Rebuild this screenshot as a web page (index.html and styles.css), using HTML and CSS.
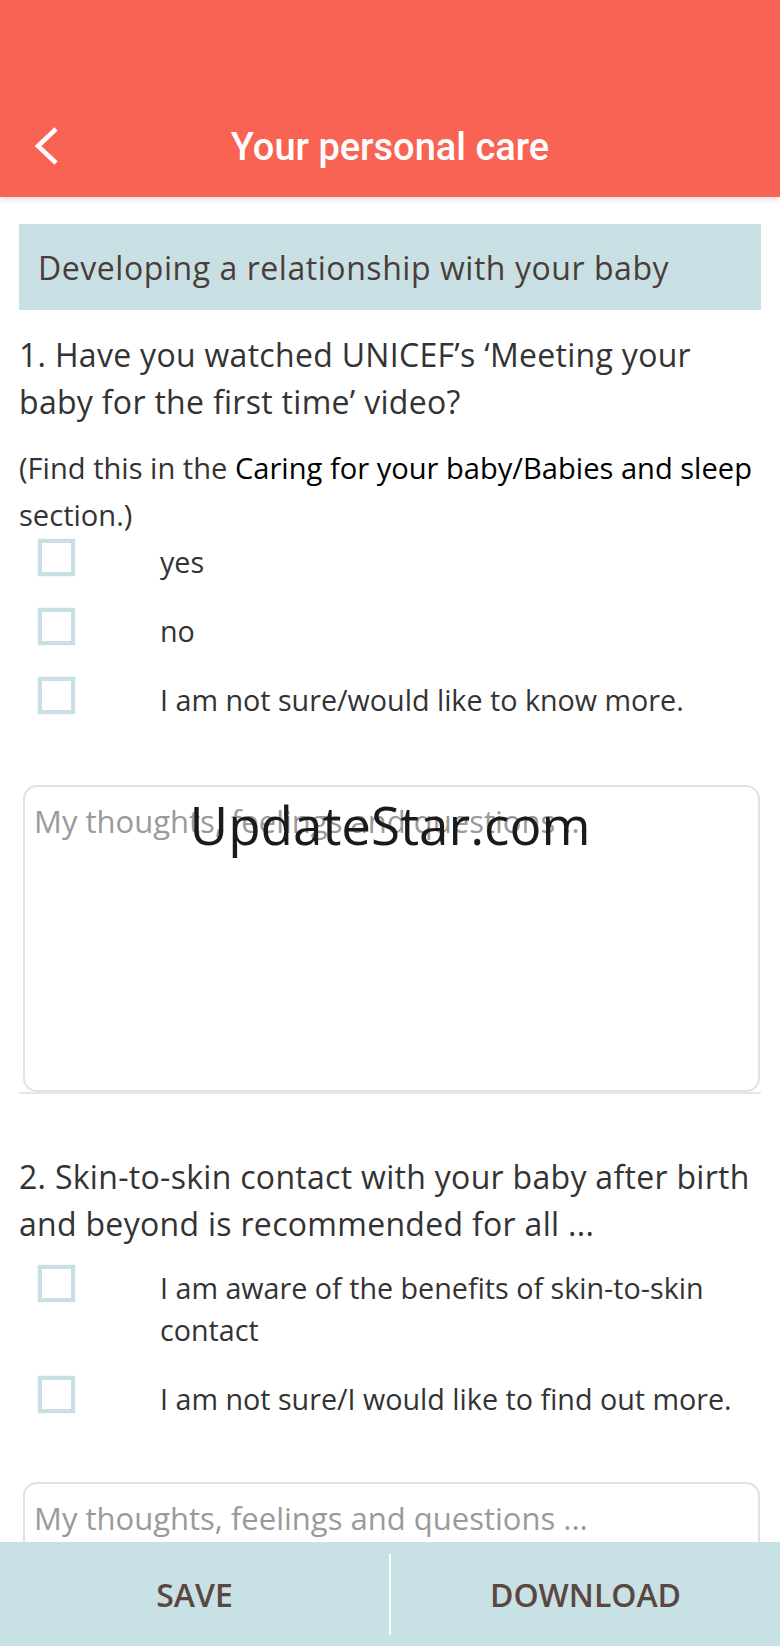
FILE: index.html
```html
<!DOCTYPE html>
<html lang="en">
<head>
    <meta charset="UTF-8">
    <meta name="viewport" content="width=device-width, initial-scale=1.0">
    <title>Your personal care</title>
    <link rel="stylesheet" href="styles.css">
</head>
<body>
    <header class="appbar">
        <div class="toolbar">
            <button class="back" aria-label="Back">
                <svg width="30" height="44" viewBox="0 0 30 44">
                    <polyline points="24,5 6,22 24,39" fill="none" stroke="#fff" stroke-width="4.5"/>
                </svg>
            </button>
            <h1>Your personal care</h1>
        </div>
    </header>

    <main class="content">
        <div class="section-title">Developing a relationship with your baby</div>

        <div class="question">
            <p class="q-text">1. Have you watched UNICEF’s ‘Meeting your baby for the first time’ video?</p>
            <p class="q-hint">(Find this in the <strong>Caring for your baby/Babies and sleep</strong> section.)</p>
            <ul class="options">
                <li><span class="box"></span><span class="label">yes</span></li>
                <li><span class="box"></span><span class="label">no</span></li>
                <li><span class="box"></span><span class="label">I am not sure/would like to know more.</span></li>
            </ul>
            <textarea class="notes tall" placeholder="My thoughts, feelings and questions ..."></textarea>
            <div class="rule"></div>
        </div>

        <div class="question second">
            <p class="q-text">2. Skin-to-skin contact with your baby after birth and beyond is recommended for all ...</p>
            <ul class="options">
                <li><span class="box"></span><span class="label">I am aware of the benefits of skin-to-skin contact</span></li>
                <li><span class="box"></span><span class="label">I am not sure/I would like to find out more.</span></li>
            </ul>
            <textarea class="notes" placeholder="My thoughts, feelings and questions ..."></textarea>
        </div>
    </main>

    <footer class="actions">
        <button class="action">SAVE</button>
        <span class="divider"></span>
        <button class="action">DOWNLOAD</button>
    </footer>

    <div class="watermark">UpdateStar.com</div>
</body>
</html>
```

FILE: styles.css
```css
* {
    box-sizing: border-box;
}

body {
    margin: 0;
    height: 100vh;
    display: flex;
    flex-direction: column;
    font-family: 'Open Sans', 'Noto Sans', sans-serif;
    color: #333;
    background: #fff;
    overflow: hidden;
    position: relative;
}

.appbar {
    flex: none;
    height: 197px;
    background: #f96354;
    display: flex;
    align-items: flex-end;
    box-shadow: 0 3px 6px rgba(0, 0, 0, 0.12);
    position: relative;
    z-index: 2;
}

.toolbar {
    height: 100px;
    width: 100%;
    display: flex;
    align-items: center;
    position: relative;
}

.back {
    background: none;
    border: none;
    padding: 0;
    margin-left: 32px;
    margin-top: -3px;
    display: flex;
}

.toolbar h1 {
    position: absolute;
    left: 0;
    right: 0;
    margin: 0;
    text-align: center;
    font-family: Roboto, sans-serif;
    font-weight: 500;
    font-size: 38px;
    color: #fff;
    pointer-events: none;
}

.content {
    flex: 1;
    min-height: 0;
    overflow: hidden;
    padding: 27px 19px 0 19px;
}

.section-title {
    background: #c8e0e3;
    height: 86px;
    display: flex;
    align-items: center;
    padding-left: 19px;
    font-size: 32px;
    letter-spacing: 0.55px;
    color: #4a3d39;
}

.q-text, .q-hint {
    margin: 0;
    font-size: 32px;
    letter-spacing: 0.3px;
    line-height: 47px;
    color: #333;
}

.q-text {
    margin-top: 21px;
}

.q-hint {
    margin-top: 20px;
    font-size: 29.1px;
    letter-spacing: 0;
}

.q-hint strong {
    font-weight: 400;
    color: #000;
}

.options {
    list-style: none;
    margin: 0;
    padding: 0;
    display: flex;
    flex-direction: column;
    gap: 25px;
}

.options li {
    display: flex;
    align-items: flex-start;
}

.box {
    flex: none;
    width: 37px;
    height: 37px;
    margin-left: 19px;
    border: 4px solid #c8e0e3;
    box-shadow: 0 0 1px rgba(140, 190, 196, 0.6);
}

.label {
    margin-left: 85px;
    padding-top: 2px;
    font-size: 28.7px;
    line-height: 42px;
    color: #333;
}

.notes {
    display: block;
    width: 737px;
    margin: 64px 0 0 4px;
    height: 307px;
    border: 2px solid #e2e2e2;
    border-radius: 14px;
    padding: 12px 9px;
    resize: none;
    font-family: inherit;
    font-size: 31px;
    line-height: 44px;
    color: #333;
    outline: none;
}

.notes::placeholder {
    color: #9a9a9a;
}

.rule {
    height: 2px;
    background: #e6e6e6;
}

.second .q-text {
    margin-top: 59px;
    margin-bottom: 18px;
}

.second .notes {
    margin-top: 62px;
}

.actions {
    flex: none;
    height: 104px;
    background: #c8e1e4;
    display: flex;
    align-items: center;
    z-index: 3;
}

.action {
    flex: 1;
    height: 100%;
    background: none;
    border: none;
    font-family: 'Open Sans', sans-serif;
    font-weight: 600;
    font-size: 32px;
    color: #5b4741;
}

.divider {
    width: 2px;
    height: 81px;
    background: #fff;
}

.watermark {
    position: absolute;
    top: 788px;
    left: 0;
    right: 0;
    text-align: center;
    font-family: 'Open Sans', sans-serif;
    font-size: 53px;
    color: #1a1a1a;
    z-index: 4;
    pointer-events: none;
}
```
